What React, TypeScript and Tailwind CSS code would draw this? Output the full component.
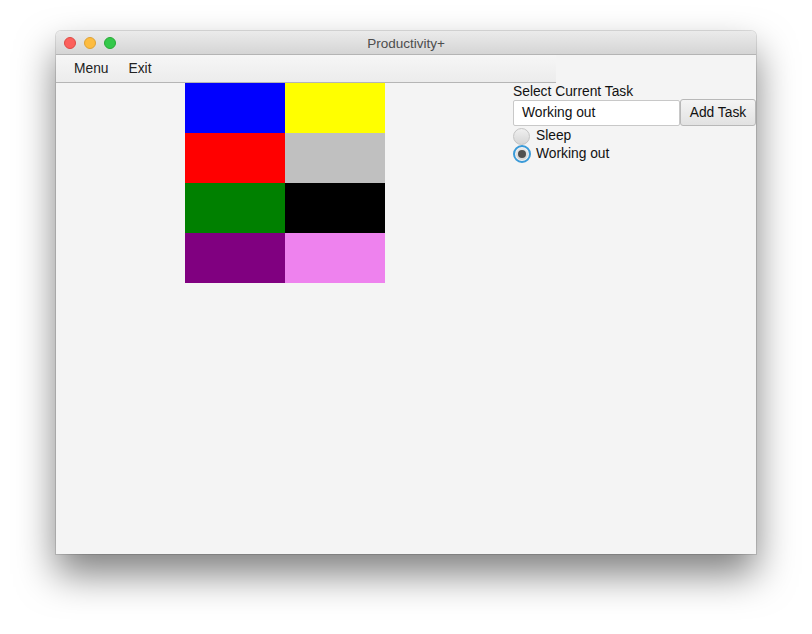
import React from "react";

const font = { fontFamily: '"Liberation Sans", Arial, sans-serif' };

const colors = [
  "#0000ff",
  "#ffff00",
  "#ff0000",
  "#c0c0c0",
  "#008000",
  "#000000",
  "#800080",
  "#ee82ee",
];

export default function App() {
  return (
    <div className="w-[812px] h-[634px] bg-white overflow-hidden pl-[56px] pt-[31px]" style={font}>
      <div className="w-[700px] h-[523px] rounded-t-[5px] bg-[#f4f4f4] flex flex-col shadow-[0_20px_38px_rgba(0,0,0,0.5),0_0_0_1px_rgba(0,0,0,0.12)]">
        {/* Title bar */}
        <div className="relative h-[24px] shrink-0 rounded-t-[5px] bg-gradient-to-b from-[#ebebeb] to-[#d5d5d5] border-b border-[#b4b4b4] flex items-center">
          <div className="flex items-center gap-[8px] pl-[8px] pt-[1px]">
            <span className="w-[12px] h-[12px] rounded-full bg-[#fc605c] border border-[#de4a44]" />
            <span className="w-[12px] h-[12px] rounded-full bg-[#fdbc40] border border-[#dea235]" />
            <span className="w-[12px] h-[12px] rounded-full bg-[#34c84a] border border-[#27aa35]" />
          </div>
          <div className="absolute inset-0 flex items-center justify-center pt-[3px] text-[13.5px] text-[#4d4d4d]">
            Productivity+
          </div>
        </div>

        {/* Menu bar */}
        <div className="h-[28px] w-[500px] shrink-0 bg-gradient-to-b from-[#f6f6f6] to-[#ececec] border-b border-[#b5b5b5] flex items-center pt-[2px] text-[13.8px] text-[#222] pl-[18px] gap-[20px]">
          <span>Menu</span>
          <span>Exit</span>
        </div>

        {/* Body */}
        <div className="flex flex-1">
          <div className="ml-[129px] w-[200px] h-[200px] grid grid-cols-2 grid-rows-4 shrink-0">
            {colors.map((c) => (
              <div key={c} style={{ backgroundColor: c }} />
            ))}
          </div>
          <div className="ml-[128px] flex flex-col text-[13.8px] text-[#111] -mt-[1px]">
            <div className="h-[16px] leading-[16px] mt-[2px]">Select Current Task</div>
            <div className="flex">
              <div className="w-[167px] h-[26px] bg-white border border-[#c8c8c8] rounded-[2px] flex items-center pl-[8px] pt-[1px]">
                Working out
              </div>
              <div className="w-[76px] h-[27px] -mt-[1px] bg-gradient-to-b from-[#f4f4f4] to-[#e2e2e2] border border-[#b8b8b8] rounded-[3px] flex items-center justify-center pt-[2px]">
                Add Task
              </div>
            </div>
            <div className="flex items-center h-[18px] mt-[1px]">
              <span className="w-[17px] h-[17px] rounded-full bg-gradient-to-b from-[#f0f0f0] to-[#d6d6d6] border border-[#c4c4c4]" />
              <span className="ml-[6px]">Sleep</span>
            </div>
            <div className="flex items-center h-[18px]">
              <span className="w-[18px] h-[18px] rounded-full border-[2px] border-[#3a9ad8] flex items-center justify-center bg-[#f2f2f2]">
                <span className="w-[12px] h-[12px] rounded-full bg-gradient-to-b from-[#e8e8e8] to-[#d4d4d4] flex items-center justify-center">
                  <span className="w-[8px] h-[8px] rounded-full bg-[#505050]" />
                </span>
              </span>
              <span className="ml-[5px]">Working out</span>
            </div>
          </div>
        </div>
      </div>
    </div>
  );
}
